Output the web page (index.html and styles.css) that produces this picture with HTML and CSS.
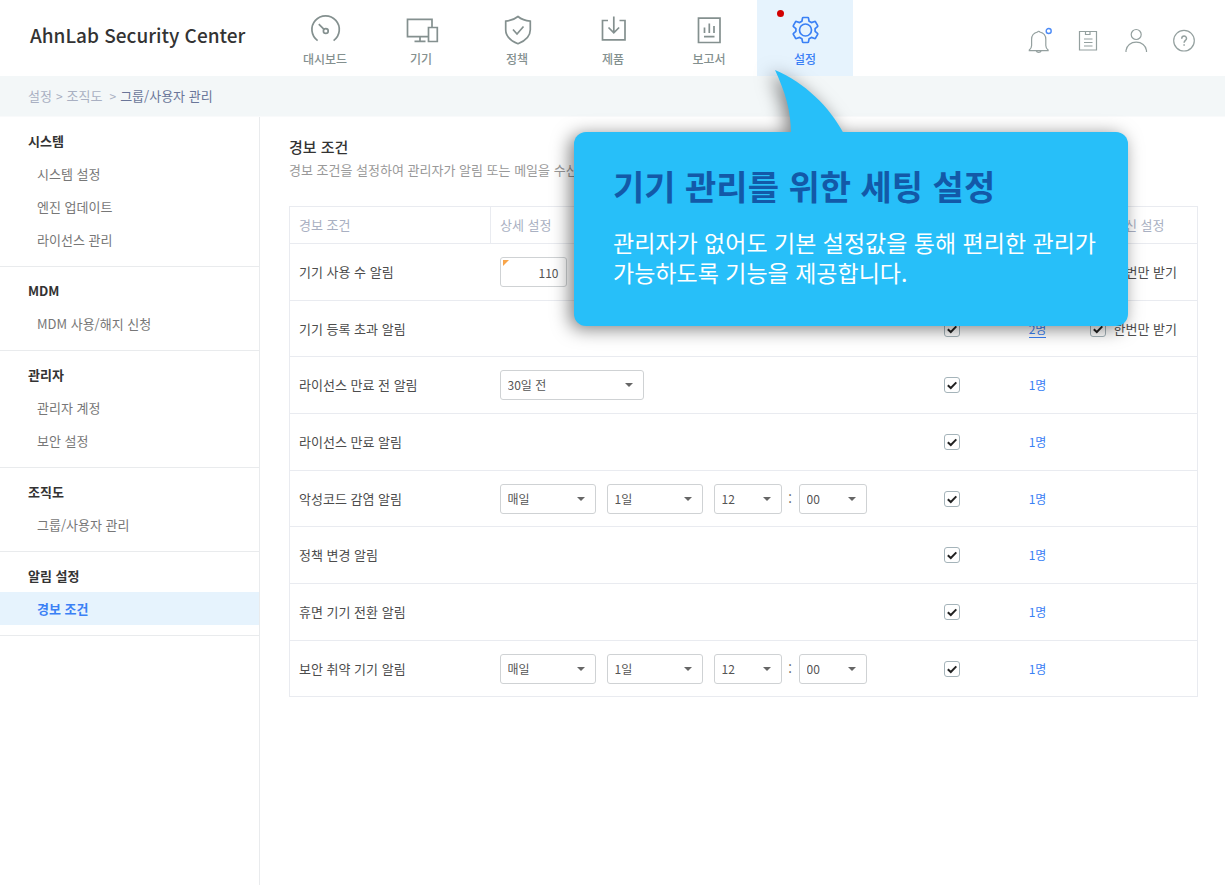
FILE: index.html
```html
<!DOCTYPE html>
<html lang="ko">
<head>
<meta charset="utf-8">
<meta name="viewport" content="width=device-width, initial-scale=1">
<title>AhnLab Security Center</title>
<link rel="stylesheet" href="styles.css">
</head>
<body>
<header class="header">
  <a class="logo" href="#">AhnLab Security Center</a>
  <nav class="nav" aria-label="주 메뉴">
    <a class="nav-item" href="#">
      <svg class="nav-icon" viewBox="0 0 32 32"><path d="M8.600 26.600a13.700 13.700 0 1 1 16 0"/><circle cx="16.800" cy="17" r="2.400"/><path d="M15 15.400 9.800 10.200"/></svg>
      <span>대시보드</span>
    </a>
    <a class="nav-item" href="#">
      <svg class="nav-icon nav-icon-wide" viewBox="0 0 36 32"><path d="M29 13V5.300H4.500v17.400H25"/><path d="M25.500 13.500h8.800v14h-8.800zM17 22.700v4.500M11.500 27.300h11"/></svg>
      <span>기기</span>
    </a>
    <a class="nav-item" href="#">
      <svg class="nav-icon" viewBox="0 0 32 32"><path d="M17 2.500C13.500 5.400 9.500 6.800 4.700 7.200v8.500c0 6.500 4.800 11 12.300 14 7.500-3 12.300-7.500 12.300-14V7.200c-4.800-.4-8.800-1.800-12.300-4.700z"/><path d="m12 15.500 4 4.500 6.500-7.500"/></svg>
      <span>정책</span>
    </a>
    <a class="nav-item" href="#">
      <svg class="nav-icon" viewBox="0 0 32 32"><path d="M11 6.500H5.500v19.300H28V6.500H22.500"/><path d="M16.800 2.500v16.300M11.500 13.500l5.300 5.300 5.300-5.300"/></svg>
      <span>제품</span>
    </a>
    <a class="nav-item" href="#">
      <svg class="nav-icon" viewBox="0 0 32 32"><path d="M5.500 4.200h21.500v24.300H5.500zM11.500 13.500v5.500M16.300 9.500V19M21 12v7M11 22.700h10.500"/></svg>
      <span>보고서</span>
    </a>
    <a class="nav-item nav-item-active" href="#" aria-current="page">
      <svg class="nav-icon" viewBox="0 0 32 32"><circle cx="16.500" cy="16" r="6"/><path stroke-linejoin="round" d="M14.200 3.500h4.600q.6 0 .7.600l.6 3.200 2.300 1.300 3.200-1.100q.6-.2.9.3l2.200 3.900q.3.500-.2.900l-2.400 2.100v2.600l2.400 2.100q.5.400.2.900l-2.200 3.900q-.3.500-.9.300l-3.200-1.100-2.300 1.300-.6 3.200q-.1.600-.7.600h-4.600q-.6 0-.7-.6l-.6-3.200-2.300-1.300-3.200 1.100q-.6.200-.9-.3l-2.200-3.900q-.3-.5.200-.9l2.400-2.100v-2.600l-2.400-2.100q-.5-.4-.2-.9l2.200-3.900q.3-.5.900-.3l3.200 1.100 2.300-1.300.6-3.200q.1-.6.700-.6z"/></svg>
      <span>설정</span>
    </a>
  </nav>
  <div class="tools">
    <button class="tool" type="button" aria-label="알림">
      <svg viewBox="0 0 28 28"><path d="M11.600 5c-3.700.9-6 3.600-6 7.300v6.200c0 2-.8 3.300-2.300 4.500v.7h18.800V23c-1.500-1.200-2.300-2.500-2.300-4.500v-6.200c0-3.700-2.300-6.400-6-7.300-.4-1-1.800-1-2.200 0zM10.300 24c.7 1.900 4.100 1.900 4.800 0"/><circle class="tool-badge" cx="22.700" cy="4" r="2.500"/></svg>
    </button>
    <button class="tool" type="button" aria-label="작업 목록">
      <svg viewBox="0 0 28 28"><path d="M5.500 4.500h17v18.500h-17zM11.500 4.500v3h4.500v-3"/><path d="M10 12h8.500M10 15.500h8.500M10 19h8.500"/></svg>
    </button>
    <button class="tool" type="button" aria-label="내 계정">
      <svg viewBox="0 0 28 28"><circle cx="14.200" cy="7.500" r="5"/><path d="M4 25v-1.500c.6-5 4.800-8.300 10.200-8.300s9.700 3.300 10.300 8.300V25"/></svg>
    </button>
    <button class="tool" type="button" aria-label="도움말">
      <svg viewBox="0 0 28 28"><circle cx="14" cy="13.700" r="10.300"/><path class="tool-mark" d="M11.700 11.700c.1-3.500 4.900-3.300 4.800-.3 0 2-2.400 2-2.400 4.300M14.100 17.200v1.600"/></svg>
    </button>
  </div>
</header>

<nav class="breadcrumb" aria-label="현재 위치">
  <a href="#">설정</a><span>&gt;</span><a href="#">조직도</a><span class="crumb-last-sep">&gt;</span><strong>그룹/사용자 관리</strong>
</nav>

<div class="layout">
  <aside class="sidebar">
    <section class="menu-group">
      <h2>시스템</h2>
      <a href="#">시스템 설정</a>
      <a href="#">엔진 업데이트</a>
      <a href="#">라이선스 관리</a>
    </section>
    <section class="menu-group">
      <h2>MDM</h2>
      <a href="#">MDM 사용/해지 신청</a>
    </section>
    <section class="menu-group">
      <h2>관리자</h2>
      <a href="#">관리자 계정</a>
      <a href="#">보안 설정</a>
    </section>
    <section class="menu-group">
      <h2>조직도</h2>
      <a href="#">그룹/사용자 관리</a>
    </section>
    <section class="menu-group">
      <h2>알림 설정</h2>
      <a class="menu-active" href="#">경보 조건</a>
    </section>
  </aside>

  <main class="content">
    <h1>경보 조건</h1>
    <p class="description">경보 조건을 설정하여 관리자가 알림 또는 메일을 수신합니다.</p>
    <table class="rules">
      <thead>
        <tr>
          <th class="col-name" scope="col">경보 조건</th>
          <th class="col-detail" scope="col">상세 설정</th>
          <td class="col-narrow"></td>
          <td class="col-narrow"></td>
          <th class="col-receive" scope="col">수신 설정</th>
        </tr>
      </thead>
      <tbody>
        <tr>
          <td>기기 사용 수 알림</td>
          <td><span class="field field-required"><input class="count" type="text" value="110" aria-label="기기 사용 수"></span></td>
          <td class="center"><input class="check" type="checkbox" checked aria-label="기기 사용 수 알림"></td>
          <td class="center"></td>
          <td><label class="once"><input class="check" type="checkbox" checked>한번만 받기</label></td>
        </tr>
        <tr>
          <td>기기 등록 초과 알림</td>
          <td></td>
          <td class="center"><input class="check" type="checkbox" checked aria-label="기기 등록 초과 알림"></td>
          <td class="center"><a class="people people-underlined" href="#">2명</a></td>
          <td><label class="once"><input class="check" type="checkbox" checked>한번만 받기</label></td>
        </tr>
        <tr>
          <td>라이선스 만료 전 알림</td>
          <td><span class="field select-large"><select aria-label="만료 전 알림 시점"><option>30일 전</option></select></span></td>
          <td class="center"><input class="check" type="checkbox" checked aria-label="라이선스 만료 전 알림"></td>
          <td class="center"><a class="people" href="#">1명</a></td>
          <td></td>
        </tr>
        <tr>
          <td>라이선스 만료 알림</td>
          <td></td>
          <td class="center"><input class="check" type="checkbox" checked aria-label="라이선스 만료 알림"></td>
          <td class="center"><a class="people" href="#">1명</a></td>
          <td></td>
        </tr>
        <tr>
          <td>악성코드 감염 알림</td>
          <td>
            <div class="schedule">
              <span class="field select-medium"><select aria-label="감염 알림 주기"><option>매일</option></select></span>
              <span class="field select-medium"><select aria-label="감염 알림 날짜"><option>1일</option></select></span>
              <div class="time">
                <span class="field select-small"><select aria-label="감염 알림 시"><option>12</option></select></span>
                <span class="colon">:</span>
                <span class="field select-small"><select aria-label="감염 알림 분"><option>00</option></select></span>
              </div>
            </div>
          </td>
          <td class="center"><input class="check" type="checkbox" checked aria-label="악성코드 감염 알림"></td>
          <td class="center"><a class="people" href="#">1명</a></td>
          <td></td>
        </tr>
        <tr>
          <td>정책 변경 알림</td>
          <td></td>
          <td class="center"><input class="check" type="checkbox" checked aria-label="정책 변경 알림"></td>
          <td class="center"><a class="people" href="#">1명</a></td>
          <td></td>
        </tr>
        <tr>
          <td>휴면 기기 전환 알림</td>
          <td></td>
          <td class="center"><input class="check" type="checkbox" checked aria-label="휴면 기기 전환 알림"></td>
          <td class="center"><a class="people" href="#">1명</a></td>
          <td></td>
        </tr>
        <tr>
          <td>보안 취약 기기 알림</td>
          <td>
            <div class="schedule">
              <span class="field select-medium"><select aria-label="취약 기기 알림 주기"><option>매일</option></select></span>
              <span class="field select-medium"><select aria-label="취약 기기 알림 날짜"><option>1일</option></select></span>
              <div class="time">
                <span class="field select-small"><select aria-label="취약 기기 알림 시"><option>12</option></select></span>
                <span class="colon">:</span>
                <span class="field select-small"><select aria-label="취약 기기 알림 분"><option>00</option></select></span>
              </div>
            </div>
          </td>
          <td class="center"><input class="check" type="checkbox" checked aria-label="보안 취약 기기 알림"></td>
          <td class="center"><a class="people" href="#">1명</a></td>
          <td></td>
        </tr>
      </tbody>
    </table>
  </main>
</div>

<div class="callout" role="note">
  <svg class="callout-tail" viewBox="0 0 69 64"><path d="M0 0C30 13 54 36 69 64H16C16 40 10 22 0 0z"/></svg>
  <h2>기기 관리를 위한 세팅 설정</h2>
  <p>관리자가 없어도 기본 설정값을 통해 편리한 관리가<br>가능하도록 기능을 제공합니다.</p>
</div>
</body>
</html>
```

FILE: styles.css
```css
* {
  box-sizing: border-box;
}

body {
  position: relative;
  display: flex;
  flex-direction: column;
  min-height: 100vh;
  margin: 0;
  background: #fff;
  color: #4c4c4c;
  font-family: "Noto Sans CJK KR", "Noto Sans", sans-serif;
  font-size: 13px;
  line-height: 20px;
}

a {
  color: inherit;
  text-decoration: none;
}

h1,
h2,
p {
  margin: 0;
}

/* Header */
.header {
  display: flex;
  height: 76px;
}

.logo {
  width: 277px;
  padding: 19px 0 0 30px;
  color: #333;
  font-size: 19px;
  font-weight: 500;
  line-height: 32px;
  white-space: nowrap;
}

.nav {
  display: flex;
}

.nav-item {
  display: flex;
  flex-direction: column;
  align-items: center;
  width: 96px;
  padding-top: 14px;
  color: #84908f;
  font-size: 12px;
  font-weight: 500;
  line-height: 26px;
}

.nav-icon {
  width: 32px;
  height: 32px;
  fill: none;
  stroke: currentColor;
  stroke-width: 1.700;
}

.nav-icon-wide {
  width: 36px;
}

.nav-item-active {
  position: relative;
  background: #e6f3fd;
  color: #3a80f5;
}

.nav-item-active::before {
  content: "";
  position: absolute;
  top: 10px;
  left: 20px;
  width: 7px;
  height: 7px;
  border-radius: 50%;
  background: #d20000;
}

.tools {
  display: flex;
  align-items: flex-start;
  gap: 20px;
  margin-left: auto;
  padding: 27px 27px 0 0;
}

.tool {
  width: 28px;
  height: 28px;
  padding: 0;
  border: 0;
  background: none;
}

.tool svg {
  display: block;
  fill: none;
  stroke: #94a09f;
  stroke-width: 1.2;
}

.tool .tool-badge {
  stroke: #4c8bf7;
  stroke-width: 1.400;
}

.tool .tool-mark {
  stroke-width: 1.500;
}

/* Breadcrumb */
.breadcrumb {
  display: flex;
  gap: 4px;
  height: 41px;
  padding-left: 28px;
  border-bottom: 1px solid #f9fafb;
  background: #f3f7f8;
  color: #a9b0c2;
  line-height: 40px;
}

.breadcrumb span {
  font-size: 12px;
}

.breadcrumb .crumb-last-sep {
  padding-left: 3px;
}

.breadcrumb strong {
  color: #6a7699;
  font-weight: 400;
}

/* Side menu */
.layout {
  display: flex;
  flex: 1;
}

.sidebar {
  flex: none;
  width: 260px;
  border-right: 1px solid #e9ebed;
}

.menu-group {
  padding: 7px 0 10px;
  border-bottom: 1px solid #e9ebed;
  line-height: 33px;
}

.menu-group h2 {
  padding-left: 28px;
  color: #333;
  font-size: 13px;
  font-weight: 700;
}

.menu-group a {
  display: block;
  padding-left: 37px;
  color: #777;
}

.menu-group .menu-active {
  background: #e6f3fd;
  color: #3a80f5;
  font-weight: 700;
}

/* Content */
.content {
  flex: 1;
  min-width: 0;
  padding: 18px 27px 0 29px;
}

.content h1 {
  color: #333;
  font-size: 15px;
  font-weight: 500;
  line-height: 24px;
}

.description {
  padding-bottom: 25px;
  color: #999;
  line-height: 22px;
}

.rules {
  width: 100%;
  border: 1px solid #e9ebf0;
  border-collapse: collapse;
  table-layout: fixed;
}

.rules th,
.rules td {
  padding: 0 0 0 9px;
  border-bottom: 1px solid #e9ebf0;
  text-align: left;
}

.rules thead th,
.rules thead td {
  height: 37px;
  color: #a9b0c2;
  font-weight: 400;
}

.rules tbody td {
  height: 57px;
}

.rules tbody tr:nth-child(3n + 2) td {
  height: 56px;
}

.rules .col-name {
  width: 201px;
  border-right: 1px solid #e9ebf0;
}

.rules .col-narrow {
  width: 86px;
  padding: 0;
}

.rules .col-receive {
  width: 117px;
  padding: 0;
  text-align: center;
}

.rules .center {
  padding: 0;
  text-align: center;
}

/* Form controls */
.field {
  position: relative;
  display: block;
}

.field select,
.field input {
  display: block;
  width: 100%;
  height: 30px;
  margin: 0;
  padding: 0 7px;
  border: 1px solid #cfd2d4;
  border-radius: 3px;
  background: #fff;
  color: #555;
  font: inherit;
  font-size: 12px;
  appearance: none;
}

.field:not(.field-required)::after {
  content: "";
  position: absolute;
  top: 13px;
  right: 11px;
  border: 4px solid transparent;
  border-top-color: #666;
  border-bottom-width: 0;
  pointer-events: none;
}

.field-required {
  width: 67px;
}

.field .count {
  text-align: right;
}

.field-required::before {
  content: "";
  position: absolute;
  top: 3px;
  left: 3px;
  border-top: 6px solid #f8a54a;
  border-right: 6px solid transparent;
}

.select-large {
  width: 144px;
}

.select-medium {
  width: 96px;
}

.select-small {
  width: 68px;
}

.schedule {
  display: flex;
  gap: 11px;
}

.time {
  display: flex;
}

.colon {
  width: 17px;
  line-height: 30px;
  text-align: center;
}

.check {
  display: block;
  width: 16px;
  height: 16px;
  margin: 0;
  border: 1px solid #a5b4ba;
  border-radius: 3px;
  background: #fff;
  appearance: none;
}

.center .check {
  margin: 0 auto;
}

.check:checked {
  background-image: url("data:image/svg+xml,%3Csvg xmlns='http://www.w3.org/2000/svg' viewBox='0 0 14 14'%3E%3Cpath d='M2.800 7.200l3 2.800 5.500-5.600' fill='none' stroke='%23222' stroke-width='2'/%3E%3C/svg%3E");
}

.people {
  color: #3a80f5;
  font-size: 12px;
}

.people-underlined {
  border-bottom: 1px solid #3a80f5;
}

.once {
  display: flex;
  align-items: center;
  gap: 8px;
  white-space: nowrap;
}

/* Callout over the page */
.callout {
  position: absolute;
  top: 132px;
  left: 574px;
  width: 554px;
  padding: 28px 0 39px 39px;
  border-radius: 12px;
  background: #27bff9;
  color: #fff;
  filter: drop-shadow(-4px 3px 9px rgba(0, 0, 0, 0.5));
}

.callout-tail {
  position: absolute;
  top: -62px;
  left: 201px;
  width: 69px;
  height: 64px;
  fill: #27bff9;
}

.callout h2 {
  color: #1359a8;
  font-size: 34px;
  font-weight: 700;
  line-height: 52px;
}

.callout p {
  padding-top: 15px;
  font-size: 23px;
  line-height: 30px;
  white-space: nowrap;
}
```
